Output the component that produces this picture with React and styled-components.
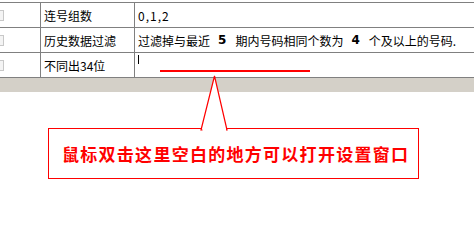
import styled, { createGlobalStyle } from "styled-components";

const GlobalStyle = createGlobalStyle`
    body {
        margin: 0;
        background: #fff;
        font-family: "Noto Sans CJK SC", "Noto Sans", sans-serif;
    }
`;

const Page = styled.div`
    position: relative;
    width: 474px;
    height: 200px;
    overflow: hidden;
    background: #fff;
`;

const Grid = styled.div`
    padding-top: 2px;
    border-bottom: 1px solid #808080;
`;

const Row = styled.div`
    display: grid;
    grid-template-columns: 40px 94px 1fr;
    height: 24px;
    border-top: 1px solid #808080;
    font-size: 12px;
    color: #000;
`;

const Cell = styled.div`
    display: flex;
    align-items: ${(p) => (p.$top ? "flex-start" : "center")};
    padding-left: 3px;
    border-left: ${(p) => (p.$first ? "none" : "1px solid #808080")};
    white-space: nowrap;
    overflow: hidden;
`;

const RowIcon = styled.span`
    display: block;
    width: 3px;
    height: 9px;
    margin-left: -3px;
    border: 1px solid #c8c8c8;
    border-left: none;
    background: #f4f4f4;
`;

const Num = styled.b`
    margin: 0 9px 0 8px;
    font-family: "DejaVu Sans", sans-serif;
    font-size: 12px;
`;

const Digits = styled.span`
    letter-spacing: 1px;
`;

const Cursor = styled.span`
    display: block;
    width: 1px;
    height: 9px;
    margin-top: 2px;
    background: #000;
`;

const Band = styled.div`
    height: 14px;
    background: #d4d0c8;
`;

const Underline = styled.div`
    position: absolute;
    left: 160px;
    top: 70px;
    width: 150px;
    height: 2px;
    background: #ff0000;
`;

const Callout = styled.div`
    position: relative;
    display: flex;
    align-items: center;
    box-sizing: border-box;
    width: 371px;
    height: 51px;
    margin: 36px 0 0 48px;
    padding-left: 13px;
    border: 1px solid #ff0000;
    color: #ff0000;
`;

const CalloutText = styled.span`
    display: block;
    width: 346px;
    font-size: 17px;
    font-weight: 700;
    line-height: 20px;
    white-space: nowrap;
    text-align: justify;
    text-align-last: justify;
    text-justify: inter-character;
`;

const Pointer = styled.svg`
    position: absolute;
    left: 151px;
    top: -54px;
`;

const rows = [
    { label: "连号组数", value: <Digits>0,1,2</Digits> },
    {
        label: "历史数据过滤",
        value: (
            <>
                过滤掉与最近<Num>5</Num>期内号码相同个数为<Num>4</Num>个及以上的号码.
            </>
        ),
    },
    { label: "不同出34位", value: <Cursor />, top: true },
];

export default function App() {
    return (
        <Page>
            <GlobalStyle />
            <Grid>
                {rows.map((row, key) => (
                    <Row key={`row-${key}`}>
                        <Cell $first>
                            <RowIcon />
                        </Cell>
                        <Cell>{row.label}</Cell>
                        <Cell $top={row.top}>{row.value}</Cell>
                    </Row>
                ))}
            </Grid>
            <Band />
            <Underline />
            <Callout>
                <Pointer width="28" height="56" viewBox="0 0 28 56">
                    <polygon points="1,55 14.5,1 27,55" fill="#fff" stroke="#ff0000" strokeWidth="1.2" />
                    <rect x="2.5" y="54" width="23.5" height="3" fill="#fff" />
                </Pointer>
                <CalloutText>鼠标双击这里空白的地方可以打开设置窗口</CalloutText>
            </Callout>
        </Page>
    );
}
